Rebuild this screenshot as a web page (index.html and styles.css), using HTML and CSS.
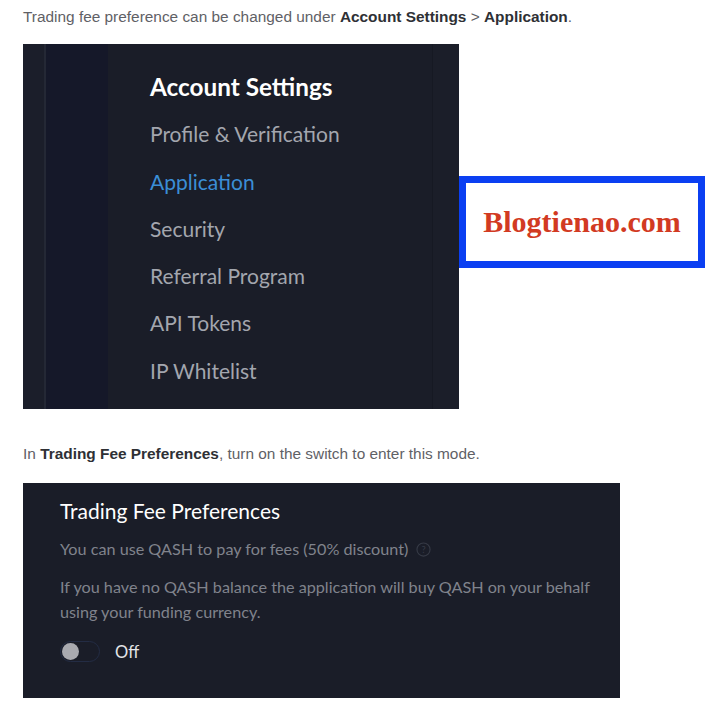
FILE: index.html
```html
<!DOCTYPE html>
<html lang='en'>
<head>
    <meta charset='UTF-8'>
    <title>Trading Fee Preferences</title>
    <link rel="stylesheet" href="styles.css">
</head>
<body>
    <div class='article'>
        <p class='note note-top'>Trading fee preference can be changed under <b>Account Settings</b> &gt; <b>Application</b>.</p>

        <div class='figure-row'>
            <div class='shot settings-shot'>
                <div class='strip strip-outer'></div>
                <div class='strip strip-line'></div>
                <div class='strip strip-inner'></div>
                <ul class='settings-menu'>
                    <li class='menu-title'>Account Settings</li>
                    <li>Profile &amp; Verification</li>
                    <li class='active'>Application</li>
                    <li>Security</li>
                    <li>Referral Program</li>
                    <li>API Tokens</li>
                    <li>IP Whitelist</li>
                </ul>
                <div class='strip strip-right'></div>
            </div>
            <div class='watermark'>Blogtienao.com</div>
        </div>

        <p class='note note-mid'>In <b>Trading Fee Preferences</b>, turn on the switch to enter this mode.</p>

        <div class='shot fee-shot'>
            <h3 class='fee-title'>Trading Fee Preferences</h3>
            <p class='fee-text'>You can use QASH to pay for fees (50% discount)
                <svg class='help-icon' width='15' height='15' viewBox='0 0 16 16'>
                    <circle cx='8' cy='8' r='7' fill='none' stroke='#363a46' stroke-width='1.2'/>
                    <text x='8' y='11.5' text-anchor='middle' font-size='10' fill='#363a46' font-family='Lato, sans-serif'>?</text>
                </svg>
            </p>
            <p class='fee-text'>If you have no QASH balance the application will buy QASH on your behalf using your funding currency.</p>
            <div class='toggle-row'>
                <span class='toggle'><span class='knob'></span></span>
                <span class='toggle-label'>Off</span>
            </div>
        </div>
    </div>
</body>
</html>
```

FILE: styles.css
```css
* {
    margin: 0;
    padding: 0;
    box-sizing: border-box;
}

body {
    background-color: #ffffff;
    font-family: "Liberation Sans", Arial, sans-serif;
}

.article {
    width: 705px;
    padding-left: 23px;
}

.note {
    font-size: 15.4px;
    line-height: 20px;
    color: #5f6166;
}

.note b {
    color: #2e3035;
}

.note-top {
    padding-top: 7px;
    height: 44px;
}

.note-mid {
    padding-top: 35px;
    height: 74px;
}

.figure-row {
    display: flex;
    align-items: flex-start;
}

.shot {
    background-color: #1a1d28;
    font-family: Lato, "Noto Sans", sans-serif;
}

.settings-shot {
    display: flex;
    width: 436px;
    height: 365px;
}

.strip {
    height: 100%;
}

.strip-outer {
    width: 21px;
    background-color: #1b1e2a;
}

.strip-line {
    width: 2px;
    background-color: #242835;
}

.strip-inner {
    width: 62px;
    background-color: #151829;
}

.strip-right {
    width: 27px;
    border-left: 1px solid #161923;
    background-color: #1b1e29;
}

.settings-menu {
    flex: 1;
    list-style: none;
    padding-top: 19px;
    padding-left: 42px;
}

.settings-menu li {
    font-size: 21px;
    line-height: 47.3px;
    color: #a3a6ae;
    white-space: nowrap;
}

.settings-menu .menu-title {
    font-size: 24.3px;
    font-weight: bold;
    color: #ffffff;
}

.settings-menu .active {
    color: #3b8ed6;
}

.watermark {
    margin-top: 132px;
    width: 246px;
    height: 92px;
    border: 7px solid #0b3ff2;
    background-color: #ffffff;
    display: flex;
    justify-content: center;
    align-items: center;
    font-family: "Liberation Serif", "DejaVu Serif", serif;
    font-weight: bold;
    font-size: 30px;
    color: #d23a22;
}

.fee-shot {
    width: 597px;
    height: 215px;
    padding: 15px 20px 0 37px;
}

.fee-title {
    font-size: 21px;
    font-weight: normal;
    line-height: 26px;
    color: #ffffff;
    margin-bottom: 12px;
}

.fee-text {
    font-size: 16.2px;
    line-height: 25px;
    color: #80838c;
    margin-bottom: 13px;
}

.help-icon {
    vertical-align: -2px;
    margin-left: 4px;
}

.toggle-row {
    display: flex;
    align-items: center;
    gap: 15px;
    margin-top: 17px;
}

.toggle {
    display: flex;
    align-items: center;
    width: 40px;
    height: 21px;
    border: 1px solid #232c44;
    border-radius: 11px;
    padding-left: 1px;
}

.knob {
    width: 17px;
    height: 17px;
    border-radius: 50%;
    background-color: #a9aab0;
}

.toggle-label {
    font-size: 16.5px;
    color: #e4e5e8;
}
```
